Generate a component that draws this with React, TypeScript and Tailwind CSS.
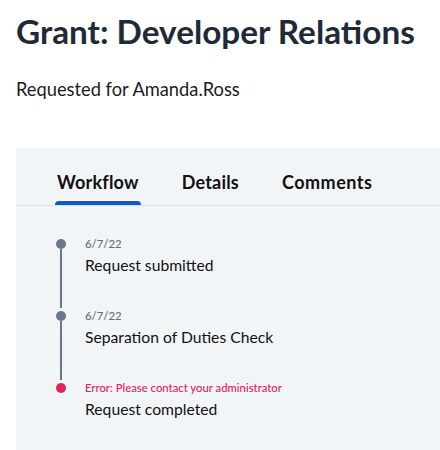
import React from "react";

const items = [
  { date: "6/7/22", title: "Request submitted", error: false },
  { date: "6/7/22", title: "Separation of Duties Check", error: false },
  { date: "Error: Please contact your administrator", title: "Request completed", error: true },
];

export default function App() {
  return (
    <div className="w-[440px] h-[450px] overflow-hidden bg-white text-[#1b2430]" style={{ fontFamily: "Lato, 'Noto Sans', sans-serif" }}>
      <div className="pl-4 pt-[11px]">
        <h1 className="text-[33.3px] font-bold leading-[40px] text-[#1f2a37]">Grant: Developer Relations</h1>
        <p className="mt-[27px] text-[18.3px] leading-[22px] text-[#1b1b1b]">Requested for Amanda.Ross</p>
        <div className="mt-[48px] bg-[#f2f5f8] h-[320px]">
          <div className="flex pl-[39px] pt-[22px] border-b border-[#dde2e8]">
            {["Workflow", "Details", "Comments"].map((t, i) => (
              <div key={t} className={`flex flex-col items-stretch ${i > 0 ? "ml-[39px]" : ""}`}>
                <span className={`px-[2px] text-[18px] font-bold leading-[24px] text-[#111] ${i === 2 ? "tracking-[0.5px]" : "tracking-[0.2px]"}`}>{t}</span>
                <span className={`mt-[7px] h-[4px] rounded-t-[4px] ${i === 0 ? "bg-[#0a5cc0]" : "bg-transparent"}`} />
              </div>
            ))}
          </div>
          <div className="pl-[40px] pt-[30px] flex flex-col">
            {items.map((it, i) => (
              <div key={i} className="flex">
                <div className="w-[10px] flex flex-col items-center">
                  <span className={`mt-[3px] w-[10px] h-[10px] rounded-full shrink-0 ${it.error ? "bg-[#e2245a]" : "bg-[#6b7788]"}`} />
                  {i < items.length - 1 && <span className="flex-1 w-[2px] bg-[#6b7788]" />}
                </div>
                <div className={`ml-[19px] ${i < items.length - 1 ? "pb-[33px]" : ""}`}>
                  <div className={`text-[11.3px] font-medium leading-[16px] ${it.error ? "text-[#e2245a]" : "text-[#5f6b7a]"}`}>{it.date}</div>
                  <div className="mt-[3px] text-[15.7px] leading-[20px] text-[#111]">{it.title}</div>
                </div>
              </div>
            ))}
          </div>
        </div>
      </div>
    </div>
  );
}
